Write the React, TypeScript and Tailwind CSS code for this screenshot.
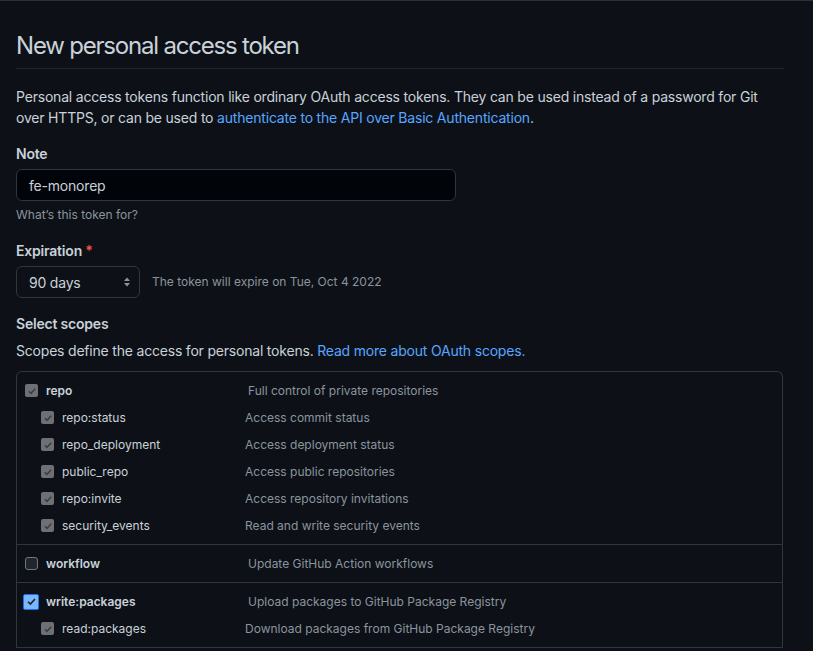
import React from "react";

type Scope = { name: string; desc: string; state: "gray" | "blue" | "empty"; sub?: boolean };

const groups: Scope[][] = [
  [
    { name: "repo", desc: "Full control of private repositories", state: "gray" },
    { name: "repo:status", desc: "Access commit status", state: "gray", sub: true },
    { name: "repo_deployment", desc: "Access deployment status", state: "gray", sub: true },
    { name: "public_repo", desc: "Access public repositories", state: "gray", sub: true },
    { name: "repo:invite", desc: "Access repository invitations", state: "gray", sub: true },
    { name: "security_events", desc: "Read and write security events", state: "gray", sub: true },
  ],
  [{ name: "workflow", desc: "Update GitHub Action workflows", state: "empty" }],
  [
    { name: "write:packages", desc: "Upload packages to GitHub Package Registry", state: "blue" },
    { name: "read:packages", desc: "Download packages from GitHub Package Registry", state: "gray", sub: true },
  ],
];

function Check({ state }: { state: Scope["state"] }) {
  if (state === "empty") {
    return <span className="block h-[13px] w-[13px] rounded-[3px] border border-[#6e7681] bg-[#21262d]" />;
  }
  if (state === "blue") {
    return (
      <span className="flex h-[16px] w-[16px] items-center justify-center rounded-[2px] border border-[#1f6feb] bg-[#79b8ff] -ml-[2px] -mr-[1px]">
        <svg width="11" height="11" viewBox="0 0 12 12">
          <path d="M2.2 6.3 L4.8 8.8 L9.8 3.2" stroke="#1f2328" strokeWidth="1.8" fill="none" />
        </svg>
      </span>
    );
  }
  return (
    <span className="flex h-[13px] w-[13px] items-center justify-center rounded-[2px] bg-[#6e7076]">
      <svg width="10" height="10" viewBox="0 0 12 12">
        <path d="M2.2 6.3 L4.8 8.8 L9.8 3.2" stroke="#3b3d42" strokeWidth="1.8" fill="none" />
      </svg>
    </span>
  );
}

export default function App() {
  return (
    <div className="min-h-[651px] border-t border-[#2d3036] bg-[#0d1117] pl-4 pr-[29px] text-[#c9d1d9] [font-family:Inter,'Noto_Sans',sans-serif]">
      {/* Heading */}
      <h1 className="border-b border-[#21262d] pb-[7px] pt-[30px] text-[24px] leading-[30px] font-normal tracking-[-1.2px]">
        New personal access token
      </h1>

      <p className="mt-[17px] text-[14px] leading-[21px] tracking-[-0.2px]">
        Personal access tokens function like ordinary OAuth access tokens. They can be used instead of a password for Git
        <br />
        over HTTPS, or can be used to{" "}
        <a className="text-[#58a6ff]">authenticate to the API over Basic Authentication</a>.
      </p>

      {/* Note */}
      <div className="mt-[15px] text-[14px] leading-[21px] font-semibold tracking-[-0.2px]">Note</div>
      <div className="mt-[5px] flex h-[32px] w-[440px] items-center rounded-md border border-[#30363d] bg-[#010409] px-3 text-[14px] tracking-[-0.2px]">
        fe-monorep
      </div>
      <div className="mt-[5px] text-[12px] leading-[18px] text-[#8b949e]">What’s this token for?</div>

      {/* Expiration */}
      <div className="mt-[16px] text-[14px] leading-[21px] font-semibold tracking-[-0.2px]">
        Expiration <span className="text-[#f85149]">*</span>
      </div>
      <div className="mt-[5px] flex items-center gap-3">
        <div className="flex h-[32px] w-[124px] items-center justify-between rounded-md border border-[#30363d] bg-[#0d1117] pl-3 pr-[8px] text-[14px] tracking-[-0.2px]">
          <span>90 days</span>
          <svg width="8" height="12" viewBox="0 0 8 12">
            <path d="M4 1.5 L7 5 L1 5 Z" fill="#8b949e" />
            <path d="M4 10.5 L7 7 L1 7 Z" fill="#8b949e" />
          </svg>
        </div>
        <span className="text-[12px] text-[#8b949e]">The token will expire on Tue, Oct 4 2022</span>
      </div>

      {/* Scopes */}
      <div className="mt-[15px] text-[14px] leading-[21px] font-semibold tracking-[-0.2px]">Select scopes</div>
      <p className="mt-[6px] text-[14px] leading-[21px] tracking-[-0.2px]">
        Scopes define the access for personal tokens. <a className="text-[#58a6ff]">Read more about OAuth scopes.</a>
      </p>

      <div className="mt-[10px] mr-[1px] rounded-t-md border border-b-0 border-[#30363d]">
        {groups.map((g, i) => (
          <div key={i} className="border-b border-[#30363d] py-[5px]">
            {g.map((s) => (
              <div key={s.name} className={`flex h-[27px] items-center text-[12px] ${s.sub ? "pl-[24px]" : "pl-[8px]"}`}>
                <div className={`flex items-center gap-[8px] ${s.sub ? "w-[204px]" : "w-[223px]"}`}>
                  <Check state={s.state} />
                  <span className={s.sub ? "" : "font-semibold"}>{s.name}</span>
                </div>
                <span className="text-[#8b949e]">{s.desc}</span>
              </div>
            ))}
          </div>
        ))}
      </div>
    </div>
  );
}
